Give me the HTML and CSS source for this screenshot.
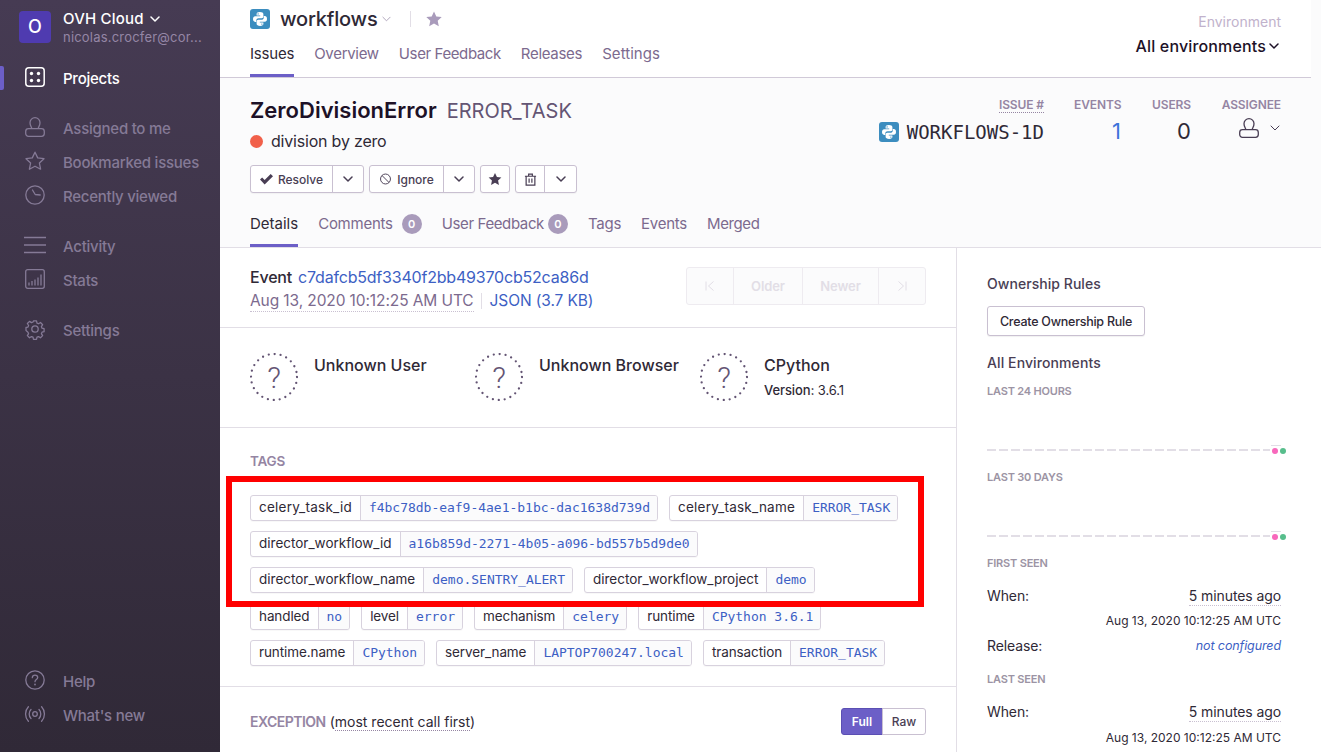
FILE: index.html
```html
<!DOCTYPE html>
<html lang="en">
<head>
<meta charset="utf-8">
<title>ZeroDivisionError</title>
<link rel="stylesheet" href="styles.css">
</head>
<body>
<svg class="defs" width="0" height="0">
  <symbol id="py" viewBox="0 0 20 20">
    <rect width="20" height="20" rx="3" fill="#3c8dbf"/>
    <path fill="#fff" d="M9.900 3C7.600 3 6.600 3.900 6.600 5.200V6.600H10.200V7.300H5.200C3.900 7.300 3 8.400 3 10.100C3 11.900 3.900 12.900 5.100 12.900H6.300V11.300C6.300 9.900 7.400 9.200 8.600 9.200H11.700C12.700 9.200 13.400 8.500 13.400 7.500V5.200C13.400 3.900 12.100 3 9.900 3ZM8.100 4.200A.7.7 0 1 1 8.100 5.600A.7.7 0 0 1 8.100 4.200Z"/>
    <path fill="#fff" d="M10.100 17C12.400 17 13.400 16.100 13.400 14.800V13.400H9.800V12.700H14.800C16.100 12.700 17 11.600 17 9.900C17 8.100 16.100 7.100 14.900 7.100H13.700V8.700C13.700 10.100 12.600 10.800 11.400 10.800H8.300C7.300 10.800 6.600 11.500 6.600 12.500V14.800C6.600 16.100 7.900 17 10.100 17ZM11.900 15.800A.7.7 0 1 1 11.900 14.400A.7.7 0 0 1 11.900 15.800Z"/>
  </symbol>
  <symbol id="chev" viewBox="0 0 10 6">
    <path d="M1 1l4 4 4-4" fill="none" stroke="currentColor" stroke-width="1.500" stroke-linecap="round" stroke-linejoin="round"/>
  </symbol>
  <symbol id="chev-thin" viewBox="0 0 10 6">
    <path d="M1 1l4 4 4-4" fill="none" stroke="currentColor" stroke-width="1" stroke-linecap="round" stroke-linejoin="round"/>
  </symbol>
  <symbol id="user" viewBox="0 0 20 20">
    <path d="M3.500 11.700h13a2.800 2.800 0 0 1 2.800 2.800v2.100a2.700 2.700 0 0 1-2.700 2.700H3.400a2.700 2.700 0 0 1-2.700-2.700v-2.100a2.800 2.800 0 0 1 2.800-2.800zM6.700 11.700c.3-1.400-1.700-2.600-1.700-6A5 5 0 0 1 10 .7a5 5 0 0 1 5 5c0 3.400-2 4.600-1.700 6" fill="none" stroke="currentColor" stroke-width="1.300"/>
  </symbol>
</svg>

<aside class="sidebar">
  <div class="org">
    <div class="org-avatar">O</div>
    <div class="org-text">
      <div class="org-name">OVH Cloud <svg class="org-chev"><use href="#chev"/></svg></div>
      <div class="org-mail">nicolas.crocfer@cor...</div>
    </div>
  </div>
  <nav class="side-group side-first">
    <a class="side-item side-active">
      <svg class="side-icon" viewBox="0 0 20 20"><rect x=".8" y=".8" width="18.400" height="18.400" rx="3" fill="none" stroke="currentColor" stroke-width="1.500"/><circle cx="6.500" cy="6.500" r="1.700" fill="currentColor"/><circle cx="13.500" cy="6.500" r="1.700" fill="currentColor"/><circle cx="6.500" cy="13.500" r="1.700" fill="currentColor"/><circle cx="13.500" cy="13.500" r="1.700" fill="currentColor"/></svg>
      Projects
    </a>
  </nav>
  <nav class="side-group">
    <a class="side-item"><svg class="side-icon"><use href="#user"/></svg>Assigned to me</a>
    <a class="side-item"><svg class="side-icon" viewBox="0 0 20 20"><path d="M10 1.200l2.700 5.700 6.300.8-4.600 4.300 1.200 6.200L10 15.200l-5.600 3 1.200-6.200L1 7.700l6.300-.8z" fill="none" stroke="currentColor" stroke-width="1.300" stroke-linejoin="round"/></svg>Bookmarked issues</a>
    <a class="side-item"><svg class="side-icon" viewBox="0 0 20 20"><circle cx="10" cy="10" r="9.200" fill="none" stroke="currentColor" stroke-width="1.300"/><path d="M7.500 5l2.700 4.500 5 .5" fill="none" stroke="currentColor" stroke-width="1.300" stroke-linecap="round" stroke-linejoin="round"/></svg>Recently viewed</a>
  </nav>
  <nav class="side-group">
    <a class="side-item"><svg class="side-icon" viewBox="0 0 20 20" overflow="visible"><path d="M-1 2.500h22M-1 10h22M-1 17.500h22" stroke="currentColor" stroke-width="1.400"/></svg>Activity</a>
    <a class="side-item"><svg class="side-icon" viewBox="0 0 20 20"><rect x=".7" y=".7" width="18.600" height="18.600" rx="2" fill="none" stroke="currentColor" stroke-width="1.300"/><path d="M4 16.500v-3M7 16.500v-4.500M10 16.500v-6M13 16.500v-8M16 16.500v-11" stroke="currentColor" stroke-width="1.300"/></svg>Stats</a>
  </nav>
  <nav class="side-group">
    <a class="side-item"><svg class="side-icon" viewBox="0 0 20 20"><path d="M8.300 1h3.400l.5 2.500 1.700.7 2.200-1.400 2.400 2.400-1.400 2.200.7 1.700 2.300.5v3.400l-2.300.5-.7 1.700 1.400 2.200-2.400 2.400-2.200-1.400-1.700.7-.5 2.300H8.300l-.5-2.300-1.700-.7-2.200 1.400-2.400-2.400 1.400-2.200-.7-1.700L0 11.700V8.300l2.200-.5.7-1.700-1.400-2.200 2.400-2.400 2.200 1.400 1.700-.7z" transform="translate(1 1) scale(.9)" fill="none" stroke="currentColor" stroke-width="1.400" stroke-linejoin="round"/><circle cx="10" cy="10" r="3.200" fill="none" stroke="currentColor" stroke-width="1.300"/></svg>Settings</a>
  </nav>
  <nav class="side-bottom">
    <a class="side-item"><svg class="side-icon" viewBox="0 0 20 20"><circle cx="10" cy="10" r="9.200" fill="none" stroke="currentColor" stroke-width="1.300"/><path d="M7.300 7.700A2.700 2.700 0 0 1 10 5.200c1.600 0 2.700 1 2.700 2.400 0 2-2.700 2-2.700 4.100" fill="none" stroke="currentColor" stroke-width="1.300" stroke-linecap="round"/><circle cx="10" cy="14.500" r=".9" fill="currentColor"/></svg>Help</a>
    <a class="side-item"><svg class="side-icon" viewBox="0 0 20 20"><circle cx="10" cy="10" r="2.300" fill="none" stroke="currentColor" stroke-width="1.300"/><path d="M6 5.500a6.500 6.500 0 0 0 0 9M14 5.500a6.500 6.500 0 0 1 0 9M3.400 2.800a10.500 10.500 0 0 0 0 14.400M16.600 2.800a10.500 10.500 0 0 1 0 14.400" fill="none" stroke="currentColor" stroke-width="1.300" stroke-linecap="round"/></svg>What's new</a>
  </nav>
</aside>

<main class="main">
  <header class="top">
    <div class="top-left">
      <div class="proj-row">
        <svg class="py20"><use href="#py"/></svg>
        <span class="proj-name">workflows</span>
        <svg class="proj-chev"><use href="#chev-thin"/></svg>
        <span class="proj-div"></span>
        <svg class="proj-star" viewBox="0 0 16 16"><path d="M8 .5l2.300 5 5.400.6-4 3.700 1.100 5.400L8 12.500l-4.800 2.700 1.100-5.400-4-3.700 5.400-.6z" fill="currentColor"/></svg>
      </div>
      <div class="proj-tabs">
        <a class="ptab ptab-on">Issues</a>
        <a class="ptab ptab-ov">Overview</a>
        <a class="ptab ptab-uf">User Feedback</a>
        <a class="ptab ptab-ov">Releases</a>
        <a class="ptab ptab-set">Settings</a>
      </div>
    </div>
    <div class="top-right">
      <div class="env-label">Environment</div>
      <div class="env-value">All environments<svg class="env-chev"><use href="#chev"/></svg></div>
    </div>
  </header>

  <section class="issue-head">
    <div class="ih-top">
      <div class="ih-left">
        <div class="ih-title"><span class="ih-err">ZeroDivisionError</span><span class="ih-sub">ERROR_TASK</span></div>
        <div class="ih-msg"><span class="ih-dot"></span>division by zero</div>
        <div class="ih-actions">
          <div class="btn-group">
            <button class="act act-main act-resolve"><svg class="act-ic" viewBox="0 0 14 12"><path d="M0 6.500L2.300 4.300 5 7 11.500.5 14 3 5 11.800z" fill="currentColor"/></svg>Resolve</button>
            <button class="act act-drop act-drop-r"><svg class="act-chev"><use href="#chev"/></svg></button>
          </div>
          <div class="btn-group">
            <button class="act act-main act-ignore"><svg class="act-ic" viewBox="0 0 14 14"><circle cx="7" cy="7" r="5.800" fill="none" stroke="currentColor" stroke-width="1.100"/><path d="M3 3l8 8" stroke="currentColor" stroke-width="1.100"/></svg>Ignore</button>
            <button class="act act-drop act-drop-i"><svg class="act-chev"><use href="#chev"/></svg></button>
          </div>
          <div class="btn-group">
            <button class="act act-star"><svg class="act-ic-star" viewBox="0 0 16 16"><path d="M8 1l2.200 4.700 5.100.6-3.800 3.500 1 5.100L8 12.400l-4.500 2.500 1-5.100L.7 6.300l5.100-.6z" fill="currentColor"/></svg></button>
          </div>
          <div class="btn-group">
            <button class="act act-trash"><svg class="act-ic-trash" viewBox="0 0 14 14"><path d="M1 3.500h12M5 3.500V1.200h4v2.300M2.300 3.500v9.500h9.400V3.500M5.500 6v4.500M8.500 6v4.500" fill="none" stroke="currentColor" stroke-width="1.300"/></svg></button>
            <button class="act act-drop act-drop-t"><svg class="act-chev"><use href="#chev"/></svg></button>
          </div>
        </div>
      </div>
      <div class="ih-stats">
        <div class="stat stat-id">
          <div class="stat-label"><span class="dotted">ISSUE #</span></div>
          <div class="stat-val stat-short"><svg class="py20"><use href="#py"/></svg><span class="short-id">WORKFLOWS-1D</span></div>
        </div>
        <div class="stat stat-ev">
          <div class="stat-label">EVENTS</div>
          <div class="stat-val stat-num stat-blue">1</div>
        </div>
        <div class="stat stat-us">
          <div class="stat-label">USERS</div>
          <div class="stat-val stat-num">0</div>
        </div>
        <div class="stat stat-as">
          <div class="stat-label">ASSIGNEE</div>
          <div class="stat-val stat-assignee"><svg class="as-user"><use href="#user"/></svg><svg class="as-chev"><use href="#chev-thin"/></svg></div>
        </div>
      </div>
    </div>
    <div class="ih-tabs">
      <a class="itab itab-on">Details</a>
      <a class="itab">Comments<span class="badge">0</span></a>
      <a class="itab itab-uf">User Feedback<span class="badge badge-tight">0</span></a>
      <a class="itab">Tags</a>
      <a class="itab">Events</a>
      <a class="itab itab-mg">Merged</a>
    </div>
  </section>

  <div class="content">
    <div class="col-left">
      <section class="ev-row">
        <div class="ev-info">
          <div class="ev-line">Event <a class="link">c7dafcb5df3340f2bb49370cb52ca86d</a></div>
          <div class="ev-date"><span class="ev-time">Aug 13, 2020 10:12:25 AM UTC</span><span class="ev-sep"></span><a class="link">JSON (3.7 KB)</a></div>
        </div>
        <div class="pager">
          <span class="pg pg-first"><svg class="pg-ic" viewBox="0 0 12 12"><path d="M2 1.500v9M9.500 1.500L4.500 6l5 4.500" fill="none" stroke="currentColor"/></svg></span>
          <span class="pg pg-old">Older</span>
          <span class="pg pg-new">Newer</span>
          <span class="pg pg-last"><svg class="pg-ic" viewBox="0 0 12 12"><path d="M10 1.500v9M2.500 1.500L7.500 6l-5 4.500" fill="none" stroke="currentColor"/></svg></span>
        </div>
      </section>

      <section class="ctx-row">
        <div class="ctx"><svg class="ctx-ph" viewBox="0 0 48 48"><circle class="ctx-ring" cx="24" cy="24" r="23"/><text class="ctx-q" x="24" y="35" text-anchor="middle">?</text></svg><div class="ctx-name">Unknown User</div></div>
        <div class="ctx"><svg class="ctx-ph" viewBox="0 0 48 48"><circle class="ctx-ring" cx="24" cy="24" r="23"/><text class="ctx-q" x="24" y="35" text-anchor="middle">?</text></svg><div class="ctx-name">Unknown Browser</div></div>
        <div class="ctx"><svg class="ctx-ph" viewBox="0 0 48 48"><circle class="ctx-ring" cx="24" cy="24" r="23"/><text class="ctx-q" x="24" y="35" text-anchor="middle">?</text></svg><div><div class="ctx-name">CPython</div><div class="ctx-ver"><b>Version:</b> 3.6.1</div></div></div>
      </section>

      <section class="tags">
        <h3 class="sec-title">TAGS</h3>
        <div class="tag-rows">
          <div class="tag-row">
            <span class="tag"><span class="tk tk-c">celery_task_id</span><span class="tv">f4bc78db-eaf9-4ae1-b1bc-dac1638d739d</span></span>
            <span class="tag"><span class="tk tk-c">celery_task_name</span><span class="tv">ERROR_TASK</span></span>
          </div>
          <div class="tag-row">
            <span class="tag"><span class="tk tk-d">director_workflow_id</span><span class="tv">a16b859d-2271-4b05-a096-bd557b5d9de0</span></span>
          </div>
          <div class="tag-row">
            <span class="tag"><span class="tk tk-d">director_workflow_name</span><span class="tv">demo.SENTRY_ALERT</span></span>
            <span class="tag"><span class="tk tk-d">director_workflow_project</span><span class="tv">demo</span></span>
          </div>
          <div class="tag-row tag-row-next">
            <span class="tag"><span class="tk">handled</span><span class="tv">no</span></span>
            <span class="tag"><span class="tk">level</span><span class="tv">error</span></span>
            <span class="tag"><span class="tk">mechanism</span><span class="tv">celery</span></span>
            <span class="tag"><span class="tk">runtime</span><span class="tv">CPython 3.6.1</span></span>
          </div>
          <div class="tag-row">
            <span class="tag"><span class="tk">runtime.name</span><span class="tv">CPython</span></span>
            <span class="tag"><span class="tk">server_name</span><span class="tv">LAPTOP700247.local</span></span>
            <span class="tag"><span class="tk">transaction</span><span class="tv">ERROR_TASK</span></span>
          </div>
        </div>
      </section>

      <section class="exc">
        <div class="exc-title"><span class="exc-h">EXCEPTION</span> <span class="exc-note">(<span class="dotted-soft">most recent call first</span>)</span></div>
        <div class="seg"><button class="seg-btn seg-on">Full</button><button class="seg-btn">Raw</button></div>
      </section>
    </div>

    <aside class="col-right">
      <h4 class="side-h side-h-own">Ownership Rules</h4>
      <button class="own-btn">Create Ownership Rule</button>
      <h4 class="side-h side-h-env">All Environments</h4>
      <div class="mini-label mini-first">LAST 24 HOURS</div>
      <div class="chart"><span class="chart-tick"></span><span class="chart-line"></span><span class="dot dot-pink"></span><span class="dot dot-green"></span></div>
      <div class="mini-label">LAST 30 DAYS</div>
      <div class="chart"><span class="chart-tick"></span><span class="chart-line"></span><span class="dot dot-pink"></span><span class="dot dot-green"></span></div>
      <div class="mini-label">FIRST SEEN</div>
      <div class="seen-row seen-when"><span>When:</span><span class="seen-ago">5 minutes ago</span></div>
      <div class="seen-date">Aug 13, 2020 10:12:25 AM UTC</div>
      <div class="seen-row seen-rel"><span>Release:</span><a class="link rel-none">not configured</a></div>
      <div class="mini-label mini-last">LAST SEEN</div>
      <div class="seen-row seen-when"><span>When:</span><span class="seen-ago">5 minutes ago</span></div>
      <div class="seen-date seen-date-last">Aug 13, 2020 10:12:25 AM UTC</div>
    </aside>
  </div>
</main>

<div class="redbox"></div>
</body>
</html>
```

FILE: styles.css
```css
* { box-sizing: border-box; }
html, body { margin: 0; height: 752px; overflow: hidden; }
body {
  position: relative;
  display: flex;
  font-family: Inter, "Noto Sans", sans-serif;
  color: #2f2936;
  background: #fff;
}
a { color: inherit; text-decoration: none; }
button { font-family: inherit; margin: 0; }
.defs { position: absolute; }

/* sidebar */
.sidebar {
  width: 220px;
  flex: none;
  height: 752px;
  display: flex;
  flex-direction: column;
  background: linear-gradient(180deg, #463b53 0%, #302937 100%);
  color: #857a96;
}
.org { display: flex; height: 61px; padding: 11px 0 0 19px; gap: 12px; }
.org-avatar {
  width: 32px; height: 32px; border-radius: 4px;
  background: #4f3bb0; color: #fff;
  font-size: 18px; line-height: 32px; text-align: center; font-weight: 500;
}
.org-text { min-width: 0; }
.org-name { color: #fff; font-size: 15px; font-weight: 500; line-height: 16px; letter-spacing: .2px; display: flex; align-items: center; gap: 6px; }
.org-chev { width: 10px; height: 6px; }
.org-mail { font-size: 13px; line-height: 16px; margin-top: 2px; color: #9586a5; white-space: nowrap; letter-spacing: .2px; }
.side-group { margin-bottom: 16px; }
.side-item {
  position: relative;
  display: flex; align-items: center;
  height: 34px; padding-left: 25px; gap: 18px;
  font-size: 15px; font-weight: 500; letter-spacing: -.25px;
}
.side-icon { width: 20px; height: 20px; flex: none; overflow: visible; margin-bottom: 2px; }
.side-active { color: #fff; }
.side-active::before {
  content: ""; position: absolute; left: 0; top: 5px;
  width: 4px; height: 24px; background: #6c5fc7; border-radius: 0 2px 2px 0;
}
.side-bottom { margin-top: auto; padding-bottom: 20px; }

/* main */
.main { flex: 1; min-width: 0; display: flex; flex-direction: column; background: #fbfbfc; }
.top {
  height: 78px; margin-right: 10px;
  background: #fff; border-bottom: 1px solid #d1cad8;
  box-shadow: 0 1px 0 #f1eff4;
  display: flex; justify-content: space-between;
  padding: 0 30px;
}
.proj-row { height: 38px; display: flex; align-items: center; }
.py20 { width: 20px; height: 20px; flex: none; display: block; }
.proj-name { font-size: 20px; font-weight: 500; margin-left: 10px; color: #2f2936; letter-spacing: -.2px; }
.proj-chev { width: 9px; height: 6px; margin-left: 4px; color: #a89db5; }
.proj-div { width: 1px; height: 16px; background: #e2dee6; margin-left: 19px; }
.proj-star { width: 16px; height: 16px; margin-left: 15px; color: #a99bbb; }
.proj-tabs { display: flex; gap: 20px; }
.ptab {
  height: 39px; padding-top: 6px; line-height: 20px;
  font-size: 15px; color: #7c6a8e; letter-spacing: -.2px;
  border-bottom: 3px solid transparent;
}
.ptab-on { color: #2f2936; border-bottom-color: #6c5fc7; }
.ptab-ov { letter-spacing: -.3px; }
.ptab-uf { letter-spacing: -.4px; }
.ptab-set { letter-spacing: .05px; }
.top-right { text-align: right; padding-top: 13px; }
.env-label { font-size: 14px; line-height: 18px; color: #c1b2cc; }
.env-value { font-size: 16px; font-weight: 500; line-height: 20px; margin-top: 5px; color: #1d1127; letter-spacing: .15px; display: flex; align-items: center; justify-content: flex-end; gap: 3px; }
.env-chev { width: 10px; height: 6px; margin-right: 2px; }

.issue-head { height: 170px; padding: 0 40px 0 30px; border-bottom: 1px solid #e2dee6; background: #fbfbfc; }
.ih-top { display: flex; justify-content: space-between; height: 115px; }
.ih-title { padding-top: 17px; line-height: 30px; display: flex; align-items: baseline; gap: 10px; height: 47px; }
.ih-err { font-size: 22px; font-weight: 600; color: #1d1127; }
.ih-sub { font-size: 20px; color: #645574; }
.ih-msg { margin-top: 5px; height: 22px; line-height: 22px; font-size: 16px; display: flex; align-items: center; gap: 8px; letter-spacing: -.2px; }
.ih-dot { width: 13px; height: 13px; border-radius: 50%; background: #f1604a; }
.ih-actions { margin-top: 13px; display: flex; gap: 5px; }
.btn-group { display: flex; height: 28px; border: 1px solid #c9c0d1; border-radius: 3px; background: #fff; box-shadow: 0 1px 1px rgba(0,0,0,.04); }
.act {
  background: none; border: 0; padding: 0; height: 26px;
  display: flex; align-items: center; justify-content: center;
  font-size: 12px; font-weight: 500; color: #493e54;
}
.act-main { border-right: 1px solid #c9c0d1; gap: 5px; }
.act-resolve { width: 82px; }
.act-ignore { width: 74px; }
.act-drop-r { width: 30px; }
.act-drop-i { width: 30px; }
.act-drop-t { width: 31px; }
.act-star { width: 28px; }
.act-trash { width: 29px; border-right: 1px solid #c9c0d1; }
.act-ic { width: 13px; height: 12px; }
.act-ic-star { width: 14px; height: 14px; }
.act-ic-trash { width: 13px; height: 13px; }
.act-chev { width: 10px; height: 6px; }
.ih-stats { display: flex; gap: 30px; padding-top: 20px; }
.stat { text-align: right; }
.stat-ev { width: 47px; }
.stat-us { width: 40px; }
.stat-as { width: 60px; }
.stat-label { font-size: 12px; line-height: 14px; font-weight: 600; color: #9585a3; white-space: nowrap; letter-spacing: -.1px; }
.dotted { border-bottom: 1px dotted #9585a3; display: inline-block; }
.stat-val { margin-top: 4px; height: 30px; line-height: 30px; }
.stat-short { display: flex; align-items: center; gap: 8px; }
.short-id { font-family: "DejaVu Sans Mono", monospace; font-size: 19px; color: #2f2936; }
.stat-num { font-size: 22px; }
.stat-blue { color: #3d74db; }
.stat-assignee { display: flex; justify-content: flex-end; align-items: flex-start; }
.as-user { width: 20px; height: 20px; color: #493e54; margin-top: 2px; }
.as-chev { width: 10px; height: 6px; color: #493e54; margin: 9px 1px 0 11px; }
.ih-tabs { display: flex; gap: 20px; margin-top: 21px; }
.itab {
  height: 33px; line-height: 20px;
  border-bottom: 3px solid transparent;
  font-size: 15px; color: #7c6a8e; display: flex; letter-spacing: -.25px;
}
.itab-on { color: #2f2936; border-bottom-color: #6c5fc7; letter-spacing: 0; }
.itab-uf { letter-spacing: -.38px; }
.itab-mg { letter-spacing: -.4px; }
.badge { width: 20px; height: 20px; border-radius: 50%; background: #a99bbb; color: #fff; font-size: 11px; font-weight: 600; text-align: center; margin-left: 9px; letter-spacing: 0; }
.badge-tight { margin-left: 4px; }

.content { flex: 1; display: flex; min-height: 0; background: #fff; }
.col-left { width: 737px; flex: none; border-right: 1px solid #e2dee6; }
.link { color: #3d5fc4; }
.ev-row { height: 80px; padding: 19px 30px 0; border-bottom: 1px solid #e2dee6; display: flex; justify-content: space-between; }
.ev-line { font-size: 16px; line-height: 20px; font-weight: 500; color: #2f2936; letter-spacing: -.2px; }
.ev-line .link { font-weight: 400; margin-left: 2px; }
.ev-date { margin-top: 4px; font-size: 15.500px; line-height: 20px; color: #7c6a8e; display: flex; letter-spacing: -.1px; }
.ev-time { border-bottom: 1px dotted #c9c0d1; height: 21px; }
.ev-sep { width: 1px; height: 16px; background: #e2dee6; margin: 2px 8px 0 7px; }
.pager { width: 240px; height: 38px; display: flex; border: 1px solid #eeebf0; border-radius: 3px; background: #fbfbfc; }
.pg { display: flex; align-items: center; justify-content: center; font-size: 13px; font-weight: 600; color: #e2dee6; border-right: 1px solid #eeebf0; letter-spacing: -.1px; }
.pg-first { width: 47px; }
.pg-old { width: 69px; }
.pg-new { width: 76px; }
.pg-last { flex: 1; border-right: 0; }
.pg-ic { width: 12px; height: 12px; }

.ctx-row { height: 100px; padding: 25px 30px 0; border-bottom: 1px solid #e2dee6; display: flex; }
.ctx { width: 225px; display: flex; gap: 16px; flex: none; white-space: nowrap; }
.ctx-ph { width: 48px; height: 48px; flex: none; }
.ctx-ring { fill: none; stroke: #645574; stroke-width: 2.300; stroke-linecap: round; stroke-dasharray: 0 6.020; }
.ctx-q { font-family: Roboto, sans-serif; font-weight: 300; font-size: 30px; fill: #645574; }
.ctx-name { font-size: 16px; font-weight: 500; line-height: 24px; color: #2f2936; height: 25px; }
.ctx-ver { font-size: 13px; line-height: 18px; margin-top: 3px; color: #2f2936; letter-spacing: -.1px; }
.ctx-ver b { font-weight: 500; }

.tags { height: 259px; padding: 24px 30px 0; border-bottom: 1px solid #e2dee6; }
.sec-title { margin: 0; font-size: 13.500px; line-height: 18px; font-weight: 600; color: #9585a3; letter-spacing: -.2px; }
.tag-rows { margin-top: 25px; display: flex; flex-direction: column; gap: 10px; }
.tag-row { display: flex; gap: 11px; }
.tag-row-next { margin-top: 1px; }
.tag { display: flex; height: 26px; border: 1px solid #d8d2de; border-radius: 3px; background: #fff; box-shadow: 0 1px 1px rgba(0,0,0,.03); font-size: 13px; line-height: 24px; overflow: hidden; }
.tk { padding: 0 8px; color: #2f2936; font-size: 13.500px; line-height: 23px; letter-spacing: -.1px; }
.tk-c { letter-spacing: .25px; }
.tk-d { letter-spacing: 0; }
.tv { padding: 0 7px 0 8px; border-left: 1px solid #d8d2de; background: #fbfbfc; color: #3d5fc4; font-family: "DejaVu Sans Mono", monospace; letter-spacing: -.02px; }

.exc { height: 66px; padding: 21px 30px 0; display: flex; justify-content: space-between; align-items: flex-start; }
.exc-title { line-height: 28px; font-size: 14px; }
.exc-h { font-weight: 600; color: #9585a3; letter-spacing: -.5px; }
.dotted-soft { border-bottom: 1px dotted #9585a3; }
.seg { display: flex; height: 27px; }
.seg-btn { width: 44px; height: 27px; padding: 0; background: #fff; border: 1px solid #c9c0d1; border-radius: 0 3px 3px 0; margin-left: -1px; font-size: 12px; font-weight: 500; color: #493e54; }
.seg-on { width: 42px; margin-left: 0; background: #6c5fc7; border-color: #5b4fb3; border-radius: 3px 0 0 3px; color: #fff; font-weight: 600; }

.col-right { flex: 1; min-width: 0; padding: 26px 40px 0 30px; background: #fff; }
.side-h { margin: 0; font-size: 14px; line-height: 20px; font-weight: 500; color: #493e54; letter-spacing: .05px; }
.own-btn { display: block; margin-top: 12px; width: 158px; height: 30px; padding: 0; background: #fff; border: 1px solid #c9c0d1; border-radius: 3px; box-shadow: 0 1px 1px rgba(0,0,0,.06); font-size: 12.500px; font-weight: 500; color: #2f2936; letter-spacing: -.25px; }
.side-h-env { margin-top: 17px; letter-spacing: .1px; }
.mini-label { font-size: 11px; line-height: 14px; font-weight: 600; color: #9c94a4; letter-spacing: -.2px; }
.mini-first { margin-top: 11px; }
.mini-last { margin-top: 16px; }
.chart { position: relative; height: 72px; }
.chart-line { position: absolute; left: 0; width: 283px; top: 51px; height: 2px; background: repeating-linear-gradient(90deg, #e2dee6 0 9px, transparent 9px 12px); }
.chart-tick { position: absolute; left: 284px; top: 47px; width: 10px; height: 1px; background: #e2dee6; }
.dot { position: absolute; top: 50px; width: 6px; height: 6px; border-radius: 50%; }
.dot-pink { left: 285px; background: #f868bc; }
.dot-green { left: 293px; background: #57be8c; }
.seen-row { display: flex; justify-content: space-between; font-size: 14px; line-height: 20px; color: #2f2936; letter-spacing: -.1px; }
.seen-when { margin-top: 16px; }
.seen-ago { height: 20px; border-bottom: 1px dotted #c9c0d1; }
.seen-date { margin-top: 6px; font-size: 12px; line-height: 18px; text-align: right; color: #2f2936; }
.seen-date-last { margin-top: 7px; }
.seen-rel { margin-top: 6px; }
.rel-none { font-style: italic; font-size: 12.500px; }

.redbox { position: absolute; left: 226px; top: 476px; width: 698px; height: 131px; border: 6px solid #f00; }
```
